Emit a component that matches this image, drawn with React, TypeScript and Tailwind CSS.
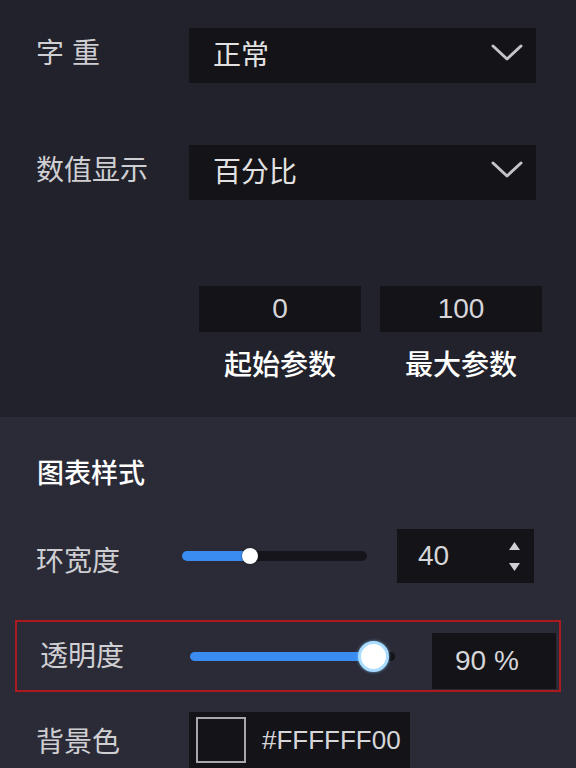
import React from 'react';

const cjk = '"Noto Sans CJK SC", "Noto Sans", sans-serif';
const latin = '"Liberation Sans", Arial, sans-serif';

function Chevron() {
  return (
    <svg width="32" height="20" viewBox="0 0 32 20" fill="none">
      <polyline points="2,3 16,16 30,3" stroke="#c4c4c8" strokeWidth="3" strokeLinecap="round" strokeLinejoin="round" />
    </svg>
  );
}

function Select({ value }: { value: string }) {
  return (
    <div className="w-[347px] h-[55px] bg-[#131318] flex items-center justify-between pl-[24px] pr-[13px] pb-[6px]">
      <span className="text-[28px] leading-none text-[#e2e2e2]" style={{ fontFamily: cjk }}>
        {value}
      </span>
      <Chevron />
    </div>
  );
}

export default function App() {
  return (
    <div className="w-[576px] h-[768px] overflow-hidden flex flex-col bg-[#2b2b37]" style={{ fontFamily: cjk }}>
      {/* 基础设置 */}
      <div className="bg-[#22222c] h-[417px] pt-[28px] shrink-0">
        <div className="flex items-center h-[55px]">
          <div className="w-[189px] pl-[36px] pb-[10px] text-[28px] leading-none text-[#cfcfd3] tracking-[8px]">字重</div>
          <Select value="正常" />
        </div>
        <div className="flex items-center h-[55px] mt-[62px]">
          <div className="w-[189px] pl-[36px] pb-[10px] text-[28px] leading-none text-[#cfcfd3]">数值显示</div>
          <Select value="百分比" />
        </div>
        <div className="flex gap-[19px] ml-[199px] mt-[86px]">
          {[
            { v: '0', l: '起始参数' },
            { v: '100', l: '最大参数' },
          ].map((p) => (
            <div key={p.l} className="w-[162px] flex flex-col items-center">
              <div
                className="w-full h-[46px] bg-[#131318] flex items-center justify-center text-[28px] text-[#d6d6d9]"
                style={{ fontFamily: latin }}
              >
                {p.v}
              </div>
              <div className="mt-[15px] text-[28px] leading-[32px] font-medium text-white">{p.l}</div>
            </div>
          ))}
        </div>
      </div>

      {/* 图表样式 */}
      <div className="flex-1">
        <div className="pt-[39px] pl-[37px] text-[27px] leading-[32px] font-medium text-white">图表样式</div>

        <div className="flex items-center h-[54px] mt-[41px]">
          <div className="w-[182px] pl-[36px] pt-[6px] text-[28px] leading-none text-[#cfcfd3]">环宽度</div>
          <div className="relative w-[185px] h-[10px] rounded-full bg-[#15151b]">
            <div className="absolute left-0 top-0 h-full w-[68px] rounded-full bg-[#3a8cf0]" />
            <div className="absolute left-[60px] top-[-3px] w-[16px] h-[16px] rounded-full bg-white shadow-[0_0_2px_rgba(0,0,0,0.6)]" />
          </div>
          <div className="ml-[30px] w-[137px] h-[54px] bg-[#131318] flex items-center justify-between pl-[21px] pr-[14px]">
            <span className="text-[28px] text-[#d6d6d9]" style={{ fontFamily: latin }}>
              40
            </span>
            <div className="flex flex-col gap-[13px]">
              <svg width="11" height="8" viewBox="0 0 11 8">
                <polygon points="5.5,0 11,8 0,8" fill="#d0d0d4" />
              </svg>
              <svg width="11" height="8" viewBox="0 0 11 8">
                <polygon points="0,0 11,0 5.5,8" fill="#d0d0d4" />
              </svg>
            </div>
          </div>
        </div>

        <div className="mt-[37px] ml-[15px] w-[546px] h-[72px] border-2 border-[#ad1a1d] flex items-center">
          <div className="w-[173px] pl-[23px] pb-[4px] text-[28px] leading-none text-[#cfcfd3]">透明度</div>
          <div className="relative w-[205px] h-[9px] rounded-full bg-[#121217]">
            <div className="absolute left-0 top-0 h-full w-[183px] rounded-full bg-[#3a8cf0]" />
            <div className="absolute left-[168px] top-[-11px] w-[31px] h-[31px] rounded-full bg-white border-[3px] border-[#a9dcff] shadow-[0_0_3px_rgba(120,200,255,0.8)]" />
          </div>
          <div
            className="ml-[37px] mt-[10px] w-[124px] h-[56px] bg-[#131318] flex items-center pl-[23px] text-[28px] text-[#d6d6d9]"
            style={{ fontFamily: latin }}
          >
            90 %
          </div>
        </div>

        <div className="flex items-center h-[56px] mt-[20px]">
          <div className="w-[189px] pl-[36px] text-[28px] leading-none text-[#cfcfd3]">背景色</div>
          <div className="w-[221px] h-[56px] bg-[#131318] flex items-center pl-[7px] gap-[16px]">
            <div className="w-[50px] h-[46px] border-2 border-[#a9a9ad] bg-[#131318]" />
            <span className="text-[26px] text-[#d6d6d9]" style={{ fontFamily: latin }}>
              #FFFFFF00
            </span>
          </div>
        </div>
      </div>
    </div>
  );
}
